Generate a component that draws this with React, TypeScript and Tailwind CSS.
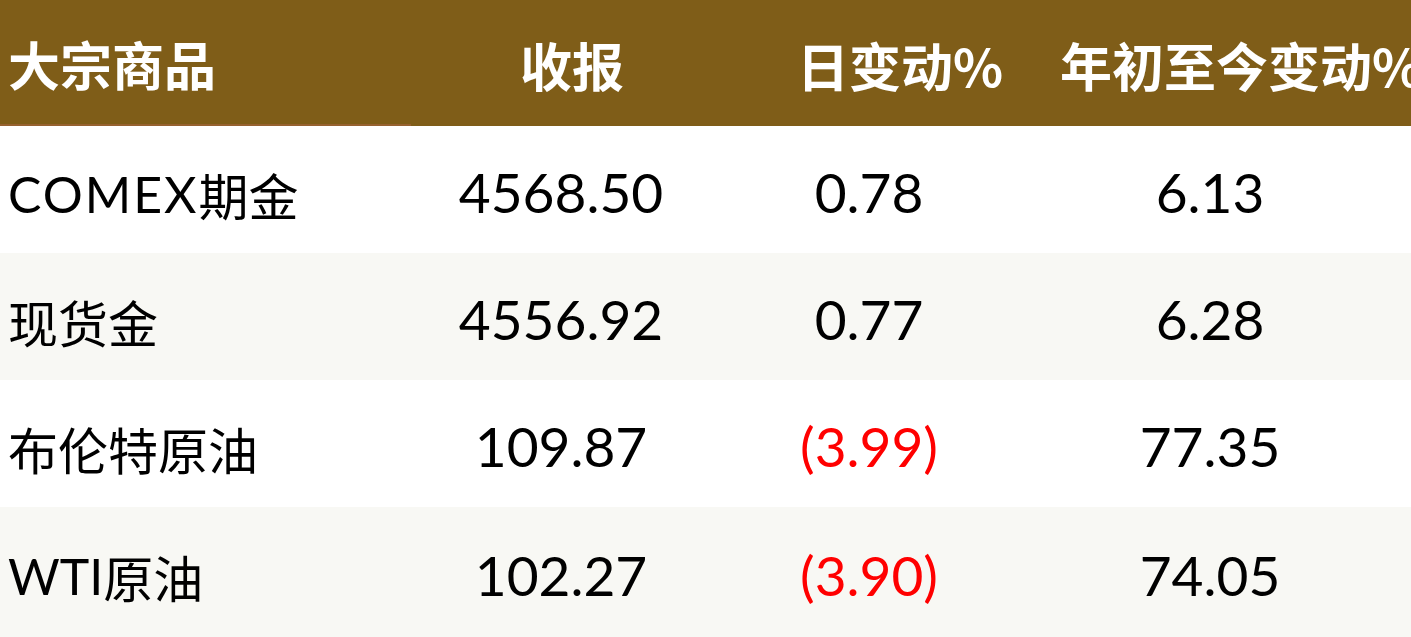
import React from "react";

const rows = [
  { name: "COMEX", cjk: "期金", close: "4568.50", day: "0.78", dayNeg: false, ytd: "6.13", bg: "bg-white" },
  { name: "", cjk: "现货金", close: "4556.92", day: "0.77", dayNeg: false, ytd: "6.28", bg: "bg-[#f8f8f4]" },
  { name: "", cjk: "布伦特原油", close: "109.87", day: "(3.99)", dayNeg: true, ytd: "77.35", bg: "bg-white" },
  { name: "WTI", cjk: "原油", close: "102.27", day: "(3.90)", dayNeg: true, ytd: "74.05", bg: "bg-[#f8f8f4]" },
];

const font = "font-['Lato','Noto_Sans_CJK_SC',sans-serif]";

export default function App() {
  return (
    <div className={`w-[1411px] h-[637px] overflow-hidden bg-white ${font}`}>
      <div className="grid grid-cols-[411px_300px_316px_384px] h-[126px] bg-[#7f5d18] text-white font-['Noto_Sans_CJK_SC',sans-serif] font-semibold text-[52px] leading-none whitespace-nowrap">
        <div className="flex items-center pl-[8px] pt-[4px] border-b-[2px] border-[#96612f]">大宗商品</div>
        <div className="flex items-center pl-[109px] pt-[4px]">收报</div>
        <div className="flex items-center pl-[86px] pt-[4px]">日变动%</div>
        <div className="flex items-center pl-[33px] pt-[4px] overflow-visible">年初至今变动%</div>
      </div>
      {rows.map((r, i) => (
        <div
          key={i}
          className={`grid grid-cols-[411px_300px_316px_384px] ${i === 3 ? "h-[130px]" : "h-[127px]"} ${r.bg} text-black leading-none whitespace-nowrap`}
        >
          <div className="flex items-center pl-[8px] pt-[8px] text-[50px]">
            {r.name && (
              <span className={i === 0 ? "tracking-[2px]" : ""}>{r.name}</span>
            )}
            <span className="font-['Noto_Sans_CJK_SC',sans-serif]">{r.cjk}</span>
          </div>
          <div className="flex items-center justify-center pt-[6px] text-[55px]">{r.close}</div>
          <div className={`flex items-center justify-center pt-[6px] text-[55px] ${r.dayNeg ? "text-[#ff0000]" : ""}`}>
            {r.day}
          </div>
          <div className="flex items-center justify-center pt-[6px] pr-[18px] text-[55px]">{r.ytd}</div>
        </div>
      ))}
    </div>
  );
}
